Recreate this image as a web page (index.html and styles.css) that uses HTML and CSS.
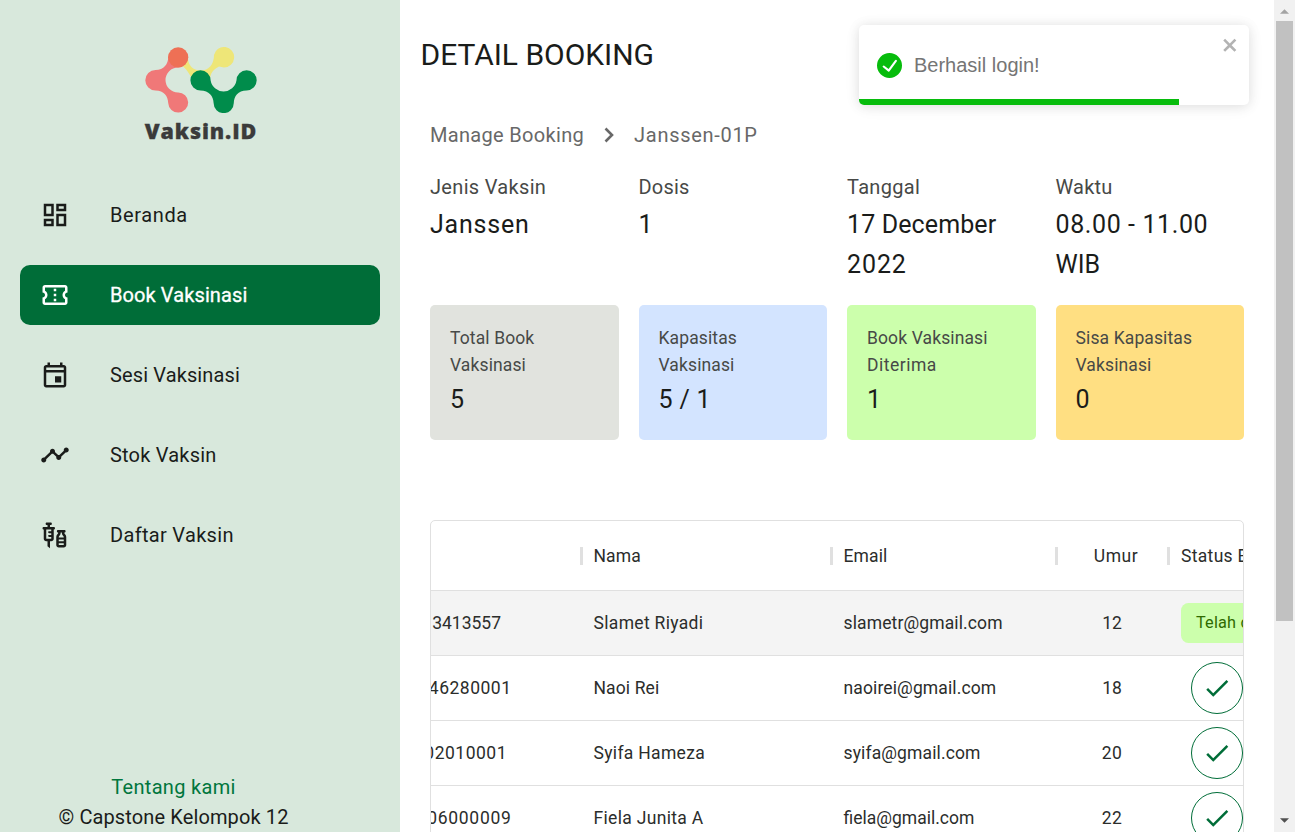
FILE: index.html
```html
<!DOCTYPE html>
<html lang="id">
<head>
<meta charset="utf-8">
<title>Vaksin.ID - Detail Booking</title>
<link rel="stylesheet" href="styles.css">
</head>
<body>
<div class="app">
  <aside class="sidebar">
    <div class="brand">
      <svg class="brand-mark" viewBox="0 0 112 66">
        <path fill="#eee678" d="M36 18 C45 24 44 30 50 34 H64 C66 29 65 24 74 19.500 L79 20.4 A10.2 10.2 0 1 0 69 8 C69 17 64 23.6 55.5 23.6 C48 23.6 43 18 43 11 L36 8Z"/>
        <path fill="#f07878" d="M33 20.5 A12.5 12.5 0 0 0 33 45.5 A10 10 0 1 1 23.2 56 C23 49 19 43.6 10.5 43.4 A10.2 10.2 0 0 1 10.5 23 C19 23 23.2 17 23.2 10.3 A10 10 0 0 1 43 10.3 A10 10 0 0 1 33 20.5Z"/>
        <circle cx="33.2" cy="10.3" r="10.1" fill="#ee7055"/>
        <path fill="#008c4b" d="M65.6 33.3 A13.1 13.1 0 0 0 91.5 33.3 A10.1 10.1 0 1 1 101.5 43.4 C93 43.6 89 49 88.8 56 A10.1 10.1 0 0 1 68.6 56 C68.4 49 64 43.6 55.5 43.4 A10.1 10.1 0 1 1 65.6 33.3Z"/>
      </svg>
      <span class="brand-name">Vaksin.ID</span>
    </div>
    <nav class="menu">
      <a class="menu-item">
        <svg class="menu-icon" viewBox="0 0 24 24"><path d="M19 5v2h-4V5h4M9 5v6H5V5h4m10 8v6h-4v-6h4M9 17v2H5v-2h4M21 3h-8v6h8V3zM11 3H3v10h8V3zm10 8h-8v10h8V11zm-10 4H3v6h8v-6z"/></svg>
        <span class="track-6">Beranda</span>
      </a>
      <a class="menu-item menu-item--active">
        <svg class="menu-icon" viewBox="0 0 24 24"><path d="M22 10V6c0-1.110-.9-2-2-2H4c-1.100 0-1.990.89-1.990 2v4c1.100 0 1.990.9 1.990 2s-.89 2-2 2v4c0 1.100.9 2 2 2h16c1.100 0 2-.9 2-2v-4c-1.100 0-2-.9-2-2s.9-2 2-2zm-2-1.460c-1.190.69-2 1.990-2 3.460s.81 2.770 2 3.460V18H4v-2.540c1.190-.69 2-1.990 2-3.460 0-1.480-.8-2.770-1.990-3.460L4 6h16v2.540zM11 15h2v2h-2zm0-4h2v2h-2zm0-4h2v2h-2z"/></svg>
        <span class="menu-text--strong">Book Vaksinasi</span>
      </a>
      <a class="menu-item">
        <svg class="menu-icon" viewBox="0 0 24 24"><path d="M19 4h-1V2h-2v2H8V2H6v2H5c-1.110 0-1.990.9-1.990 2L3 20c0 1.100.89 2 2 2h14c1.100 0 2-.9 2-2V6c0-1.100-.9-2-2-2zm0 16H5V10h14v10zm0-12H5V6h14v2zm-7 5h5v5h-5z"/></svg>
        <span class="track-1">Sesi Vaksinasi</span>
      </a>
      <a class="menu-item">
        <svg class="menu-icon" viewBox="0 0 24 24"><path d="M23 8c0 1.100-.9 2-2 2-.18 0-.35-.02-.51-.07l-3.560 3.550c.05.16.07.34.07.52 0 1.100-.9 2-2 2s-2-.9-2-2c0-.18.02-.36.07-.52l-2.550-2.550c-.16.05-.34.07-.52.07s-.36-.02-.52-.07l-4.550 4.560c.05.16.07.33.07.51 0 1.100-.9 2-2 2s-2-.9-2-2 .9-2 2-2c.18 0 .35.02.51.07l4.560-4.550C8.020 9.360 8 9.180 8 9c0-1.100.9-2 2-2s2 .9 2 2c0 .18-.02.36-.07.52l2.550 2.550c.16-.05.34-.07.52-.07s.36.02.52.07l3.550-3.560C19.020 8.350 19 8.180 19 8c0-1.100.9-2 2-2s2 .9 2 2z"/></svg>
        <span class="track-2">Stok Vaksin</span>
      </a>
      <a class="menu-item">
        <svg class="menu-icon" viewBox="0 0 24 24"><path d="M11 5.500H8V4h.5c.55 0 1-.45 1-1s-.45-1-1-1h-3c-.55 0-1 .45-1 1s.45 1 1 1H6v1.500H3c-.55 0-1 .45-1 1s.45 1 1 1V15c0 1.100.9 2 2 2h1v4l2 1.500V17h1c1.100 0 2-.9 2-2V7.500c.55 0 1-.45 1-1s-.45-1-1-1zM9 9H7.250c-.41 0-.75.34-.75.75s.34.75.75.75H9V12H7.250c-.41 0-.75.34-.75.75s.34.75.75.75H9V15H5V7.500h4V9zm10.500 1.500V10c.55 0 1-.45 1-1s-.45-1-1-1h-5c-.55 0-1 .45-1 1s.45 1 1 1v.5c0 .5-1.500 1.160-1.500 3V20c0 1.100.9 2 2 2h4c1.100 0 2-.9 2-2v-6.500c0-1.840-1.500-2.500-1.500-3zm-3 0V10h1v.5c0 1.600 1.500 2 1.500 3v.5h-4v-.5c0-1 1.500-1.400 1.500-3zm2.500 5V17h-4v-1.500h4zM15 20v-1.500h4V20h-4z"/></svg>
        <span class="track-3">Daftar Vaksin</span>
      </a>
    </nav>
    <footer class="credits">
      <a class="credits-link track-3">Tentang kami</a>
      <span class="track-1">© Capstone Kelompok 12</span>
    </footer>
  </aside>

  <main class="content">
    <h1 class="page-title">DETAIL BOOKING</h1>
    <div class="crumbs">
      <span class="track-3">Manage Booking</span>
      <svg class="crumb-arrow" viewBox="0 0 10 16"><path d="M1.500 1.500 8 8l-6.500 6.500"/></svg>
      <span class="track-7">Janssen-01P</span>
    </div>

    <section class="facts">
      <div><p class="fact-label track-3">Jenis Vaksin</p><p class="fact-value track-8">Janssen</p></div>
      <div><p class="fact-label track-2">Dosis</p><p class="fact-value">1</p></div>
      <div><p class="fact-label track-3">Tanggal</p><p class="fact-value"><span class="track-1">17 December</span> <span class="track-9">2022</span></p></div>
      <div><p class="fact-label track-2">Waktu</p><p class="fact-value"><span class="track-6">08.00 - 11.00</span> WIB</p></div>
    </section>

    <section class="cards">
      <div class="card card--grey"><p class="card-label track-1">Total Book Vaksinasi</p><p class="card-value">5</p></div>
      <div class="card card--blue"><p class="card-label track-1">Kapasitas Vaksinasi</p><p class="card-value track-3">5 / 1</p></div>
      <div class="card card--green"><p class="card-label track-1">Book Vaksinasi <span class="track-5">Diterima</span></p><p class="card-value">1</p></div>
      <div class="card card--yellow"><p class="card-label track-1">Sisa Kapasitas Vaksinasi</p><p class="card-value">0</p></div>
    </section>

    <section class="table">
      <div class="row row--head">
        <div class="cell cell--nik"></div>
        <div class="cell track-1">Nama</div>
        <div class="cell track-1">Email</div>
        <div class="cell cell--umur track-5">Umur</div>
        <div class="cell cell--status track-3">Status Booking</div>
      </div>
      <div class="row row--hover">
        <div class="cell cell--nik nik-a">3413557</div>
        <div class="cell track-3">Slamet Riyadi</div>
        <div class="cell track-1">slametr@gmail.com</div>
        <div class="cell cell--umur">12</div>
        <div class="cell cell--status"><span class="chip track-2">Telah diterima</span></div>
      </div>
      <div class="row">
        <div class="cell cell--nik nik-b track-5">46280001</div>
        <div class="cell track-1">Naoi Rei</div>
        <div class="cell track-1">naoirei@gmail.com</div>
        <div class="cell cell--umur">18</div>
        <div class="cell cell--status"><span class="approve"><svg viewBox="0 0 24 24"><path d="M9 16.170 4.830 12l-1.420 1.410L9 19 21 7l-1.410-1.410z"/></svg></span></div>
      </div>
      <div class="row">
        <div class="cell cell--nik nik-c track-5">02010001</div>
        <div class="cell track-3">Syifa Hameza</div>
        <div class="cell track-1">syifa@gmail.com</div>
        <div class="cell cell--umur track-5">20</div>
        <div class="cell cell--status"><span class="approve"><svg viewBox="0 0 24 24"><path d="M9 16.170 4.830 12l-1.420 1.410L9 19 21 7l-1.410-1.410z"/></svg></span></div>
      </div>
      <div class="row">
        <div class="cell cell--nik nik-b track-7">06000009</div>
        <div class="cell track-3">Fiela Junita A</div>
        <div class="cell">fiela@gmail.com</div>
        <div class="cell cell--umur track-3">22</div>
        <div class="cell cell--status"><span class="approve"><svg viewBox="0 0 24 24"><path d="M9 16.170 4.830 12l-1.420 1.410L9 19 21 7l-1.410-1.410z"/></svg></span></div>
      </div>
    </section>
  </main>

  <div class="scrollbar">
    <svg class="scroll-up" viewBox="0 0 10 5"><path d="M0 5 5 0l5 5z"/></svg>
    <div class="scroll-thumb"></div>
    <svg class="scroll-down" viewBox="0 0 10 5"><path d="M0 0h10L5 5z"/></svg>
  </div>
</div>

<div class="toast">
  <div class="toast-body">
    <svg class="toast-icon" viewBox="0 0 24 24"><path d="M12 0a12 12 0 1 0 12 12A12.014 12.014 0 0 0 12 0zm6.927 8.200-6.845 9.289a1.011 1.011 0 0 1-1.430.188l-4.888-3.908a1 1 0 1 1 1.250-1.562l4.076 3.261 6.227-8.451a1 1 0 1 1 1.610 1.183z"/></svg>
    <span>Berhasil login!</span>
  </div>
  <svg class="toast-close" viewBox="0 0 14 16"><path fill-rule="evenodd" d="M7.710 8.230l3.750 3.750-1.480 1.480-3.750-3.750-3.750 3.750L1 11.980l3.750-3.750L1 4.480 2.480 3l3.750 3.750L9.980 3l1.480 1.480-3.750 3.750z"/></svg>
  <div class="toast-progress"></div>
</div>
</body>
</html>
```
FILE: styles.css
```css
* { box-sizing: border-box; }
body {
  margin: 0;
  overflow: hidden;
  background: #fff;
  color: #1a1c1a;
  font: 400 20px/30px Roboto, sans-serif;
}
p, h1 { margin: 0; font-weight: 400; }

/* letter tracking steps */
.track-1 { letter-spacing: 0.12px; }
.track-2 { letter-spacing: 0.2px; }
.track-3 { letter-spacing: 0.32px; }
.track-5 { letter-spacing: 0.5px; }
.track-6 { letter-spacing: 0.6px; }
.track-7 { letter-spacing: 0.7px; }
.track-8 { letter-spacing: 0.8px; }
.track-9 { letter-spacing: 0.9px; }

.app { display: flex; height: 832px; overflow: hidden; }

/* sidebar */
.sidebar {
  display: flex;
  flex-direction: column;
  flex: 0 0 400px;
  height: 832px;
  padding: 47px 20px 0;
  background: #d8e8dc;
}
.brand { display: flex; flex-direction: column; align-items: center; height: 138px; padding-left: 2px; }
.brand-mark { width: 112px; height: 66px; flex: none; }
.brand-name {
  margin-top: 3px;
  color: #3b3b3b;
  font: 800 21.500px/30px "Open Sans", sans-serif;
  letter-spacing: 0.9px;
  -webkit-text-stroke: 0.3px #3b3b3b;
}
.menu { display: flex; flex-direction: column; gap: 20px; }
.menu-item {
  display: flex;
  align-items: center;
  height: 60px;
  padding-left: 20px;
  border-radius: 10px;
}
.menu-icon { width: 30px; height: 30px; margin-right: 40px; fill: currentColor; }
.menu-item--active { background: #006d38; color: #fff; }
.menu-text--strong { letter-spacing: 0.1px; -webkit-text-stroke: 0.3px #fff; }
.credits {
  display: flex;
  flex-direction: column;
  align-items: center;
  margin-top: auto;
  width: 307px;
}
.credits-link { color: #00763d; }

/* content */
.content { flex: 1; min-width: 0; padding: 35px 30px 0; overflow: hidden; }
.page-title { margin-left: -9.500px; font-size: 30px; line-height: 40px; letter-spacing: -0.03px; }
.crumbs { display: flex; align-items: center; margin-top: 45px; color: #686868; }
.crumb-arrow { width: 10px; height: 16px; margin: 0 20px; fill: none; stroke: #686868; stroke-width: 2.6; }
.facts, .cards { display: grid; grid-template-columns: repeat(4, 1fr); column-gap: 20px; }
.facts { margin-top: 22px; }
.fact-label { color: #474947; }
.fact-value { margin-top: 3px; font-size: 25px; line-height: 40px; }
.cards { margin-top: 20px; }
.card { height: 135px; padding: 20px; border-radius: 5px; }
.card-label { color: #474947; font-size: 17.500px; line-height: 27px; }
.card-value { margin-top: 1px; font-size: 25px; line-height: 40px; }
.card--grey { background: #e1e3de; }
.card--blue { background: #d3e4ff; }
.card--green { background: #ccffac; }
.card--yellow { background: #ffdf82; }

/* booking table */
.table {
  margin-top: 80px;
  border: 1px solid #e0e0e0;
  border-radius: 5px;
  overflow: hidden;
  font-size: 17.500px;
  height: 400px;
  color: #2b2d2b;
}
.row {
  display: grid;
  grid-template-columns: 150px 250px 225px 112px 250px;
  height: 65px;
  border-bottom: 1px solid #e0e0e0;
}
.row--head { height: 70px; }
.row--hover { background: #f4f4f4; }
.cell { display: flex; align-items: center; padding-left: 12.500px; white-space: nowrap; }
.cell--nik { justify-content: flex-end; overflow: hidden; padding: 0; }
.nik-a { width: 70px; }
.nik-b { width: 80.500px; }
.nik-c { width: 76px; }
.cell--umur { justify-content: center; padding: 0; }
.row--head .cell--umur { padding-left: 8px; }
.cell--status { padding-left: 13px; }
.row--head .cell { position: relative; overflow: visible; }
/* column resize handle sits over the cell boundary */
.row--head .cell::after {
  content: "";
  position: absolute;
  top: 26px;
  right: -2px;
  width: 3px;
  height: 18px;
  background: #e0e0e0;
}
.chip {
  display: flex;
  align-items: center;
  height: 40px;
  padding: 0 15px;
  border-radius: 7.500px;
  background: #ccffac;
  color: #2f6b00;
  font-size: 16.250px;
}
.approve {
  display: flex;
  align-items: center;
  justify-content: center;
  width: 52px;
  height: 52px;
  margin-left: 10px;
  border: 1px solid #006d38;
  border-radius: 50%;
}
.approve svg { width: 30px; height: 30px; fill: #006d38; }

/* window scrollbar */
.scrollbar {
  display: flex;
  flex-direction: column;
  align-items: center;
  flex: 0 0 21px;
  padding: 9px 0 9px;
  background: #f1f1f1;
}
.scroll-up { width: 9px; height: 5px; fill: #a3a3a3; }
.scroll-thumb { width: 17px; height: 600px; margin-top: 7px; background: #c1c1c1; }
.scroll-down { width: 9px; height: 5px; margin-top: auto; fill: #505050; }

/* notification laid over the page */
.toast {
  position: absolute;
  top: 25px;
  left: 859px;
  width: 390px;
  height: 80px;
  border-radius: 5px;
  background: #fff;
  box-shadow: 0 1px 12px rgba(0, 0, 0, 0.1), 0 2px 18px rgba(0, 0, 0, 0.05);
  overflow: hidden;
  color: #757575;
  font-family: "Liberation Sans", Arial, sans-serif;
}
.toast-body { display: flex; align-items: center; gap: 12px; height: 80px; padding-left: 18px; }
.toast-icon { width: 25px; height: 25px; fill: #07bc0c; }
.toast-close { position: absolute; top: 10px; right: 10px; width: 17.500px; height: 20px; fill: #b3b3b3; }
.toast-progress { position: absolute; left: 0; bottom: 0; width: 320px; height: 6px; background: #07bc0c; }
```
